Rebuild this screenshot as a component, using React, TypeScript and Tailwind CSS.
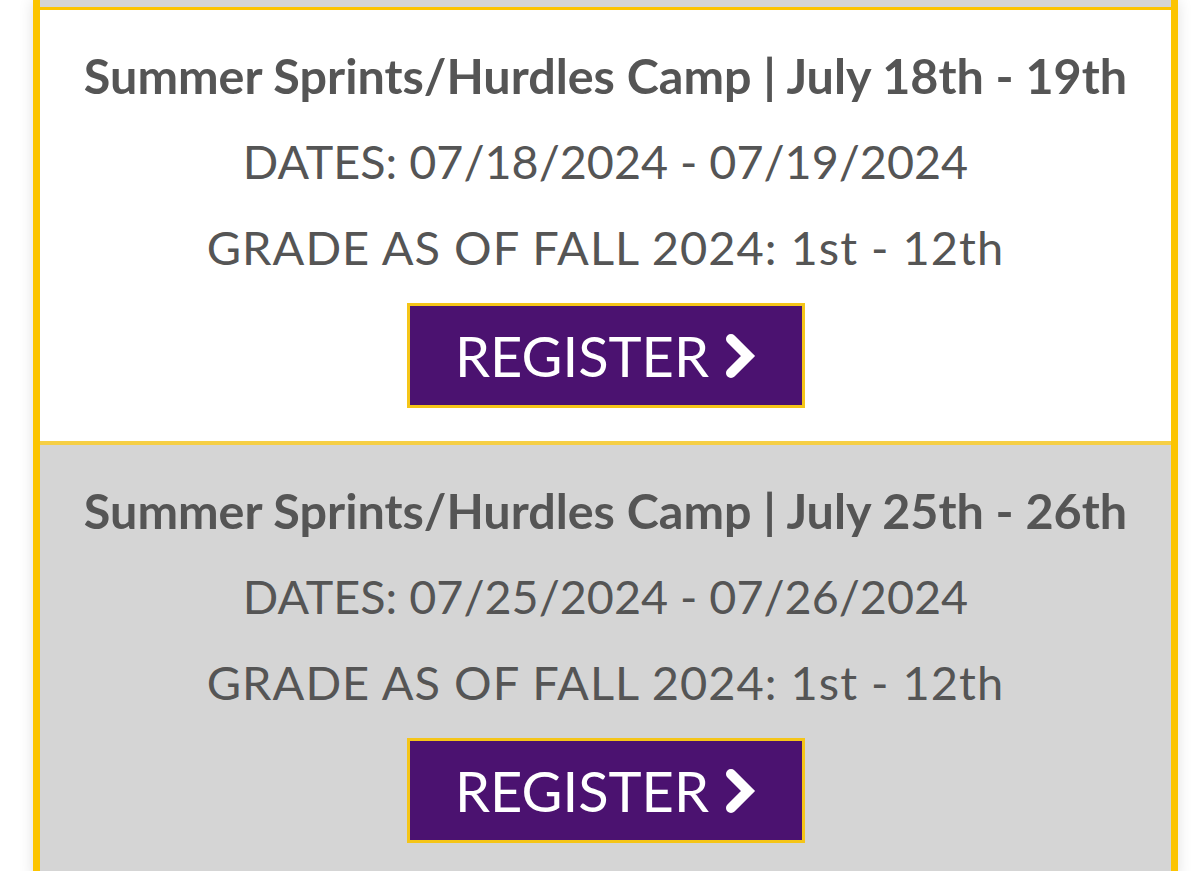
import React from 'react'

const camps = [
    { title: 'Summer Sprints/Hurdles Camp | July 18th - 19th', dates: 'DATES: 07/18/2024 - 07/19/2024', bg: 'bg-white' },
    { title: 'Summer Sprints/Hurdles Camp | July 25th - 26th', dates: 'DATES: 07/25/2024 - 07/26/2024', bg: 'bg-[#d5d5d5]' },
]

function Chevron() {
    return (
        <svg width="32" height="48" viewBox="0 0 32 48" fill="none">
            <path d="M7 7 L24 24 L7 41" stroke="white" strokeWidth="10" strokeLinecap="round" strokeLinejoin="miter" />
        </svg>
    )
}

function CampCard({ title, dates, bg }: { title: string; dates: string; bg: string }) {
    return (
        <div className={`${bg} flex flex-col items-center pt-[22px] pb-[33px] border-b-4 border-[#f6cf45]`}>
            <h2 className="text-[48.5px] leading-[86px] font-bold text-[#555] whitespace-nowrap">{title}</h2>
            <p className="text-[46.7px] leading-[86px] text-[#555] whitespace-nowrap">{dates}</p>
            <p className="text-[47px] leading-[86px] tracking-[1px] text-[#555] whitespace-nowrap">GRADE AS OF FALL 2024: 1st - 12th</p>
            <button className="mt-[13px] w-[398px] h-[105px] border-[3px] border-[#f5c518] bg-[#4b1270] text-white flex items-center justify-center gap-[15px]">
                <span className="text-[56px] leading-none">REGISTER</span>
                <Chevron />
            </button>
        </div>
    )
}

export default function App() {
    return (
        <div className="min-h-screen bg-white overflow-hidden" style={{ fontFamily: 'Lato, "Noto Sans", sans-serif' }}>
            <div className="ml-[33px] w-[1145px] border-x-[7px] border-[#fcc400] shadow-[0_0_14px_rgba(0,0,0,0.12)]">
                <div className="h-[7px] bg-[#d5d5d5]" />
                <div className="h-[3px] bg-[#fcc400]" />
                {camps.map((c) => (
                    <CampCard key={c.title} {...c} />
                ))}
            </div>
        </div>
    )
}
